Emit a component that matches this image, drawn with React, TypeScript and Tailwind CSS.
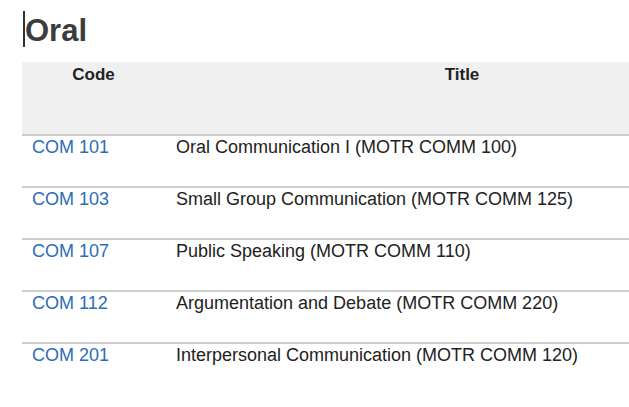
import React from 'react';

const courses = [
  { code: 'COM 101', title: 'Oral Communication I (MOTR COMM 100)' },
  { code: 'COM 103', title: 'Small Group Communication (MOTR COMM 125)' },
  { code: 'COM 107', title: 'Public Speaking (MOTR COMM 110)' },
  { code: 'COM 112', title: 'Argumentation and Debate (MOTR COMM 220)' },
  { code: 'COM 201', title: 'Interpersonal Communication (MOTR COMM 120)' },
];

export default function App() {
  return (
    <div className="w-[629px] h-[407px] overflow-hidden bg-white pl-[22px] font-['Liberation_Sans',Arial,sans-serif]">
      <div className="h-[62px] pt-[11px] flex items-start">
        <span className="ml-[1px] w-[2px] h-[36px] bg-[#333]"></span>
        <h1 className="text-[31px] leading-[40px] font-bold text-[#3c3c3c]">Oral</h1>
      </div>
      <table className="w-[737px] border-collapse table-fixed">
        <colgroup>
          <col className="w-[143px]" />
          <col />
        </colgroup>
        <thead>
          <tr className="bg-[#f0f0f0] border-b-2 border-[#cdcdcd]">
            <th className="h-[73px] align-top pt-[2px] text-[17px] leading-[22px] font-bold text-[#222] text-center">Code</th>
            <th className="h-[73px] align-top pt-[2px] text-[17px] leading-[22px] font-bold text-[#222] text-center">Title</th>
          </tr>
        </thead>
        <tbody>
          {courses.map((c, i) => (
            <tr key={c.code} className={i < courses.length - 1 ? 'border-b-2 border-[#cdcdcd]' : ''}>
              <td className="h-[52px] align-top pt-0 pl-[10px] text-[18px] leading-[22px]">
                <a href="#" className="text-[#2b6db8]">{c.code}</a>
              </td>
              <td className="h-[52px] align-top pt-0 pl-[11px] text-[18px] leading-[22px] text-[#222]">{c.title}</td>
            </tr>
          ))}
        </tbody>
      </table>
    </div>
  );
}
